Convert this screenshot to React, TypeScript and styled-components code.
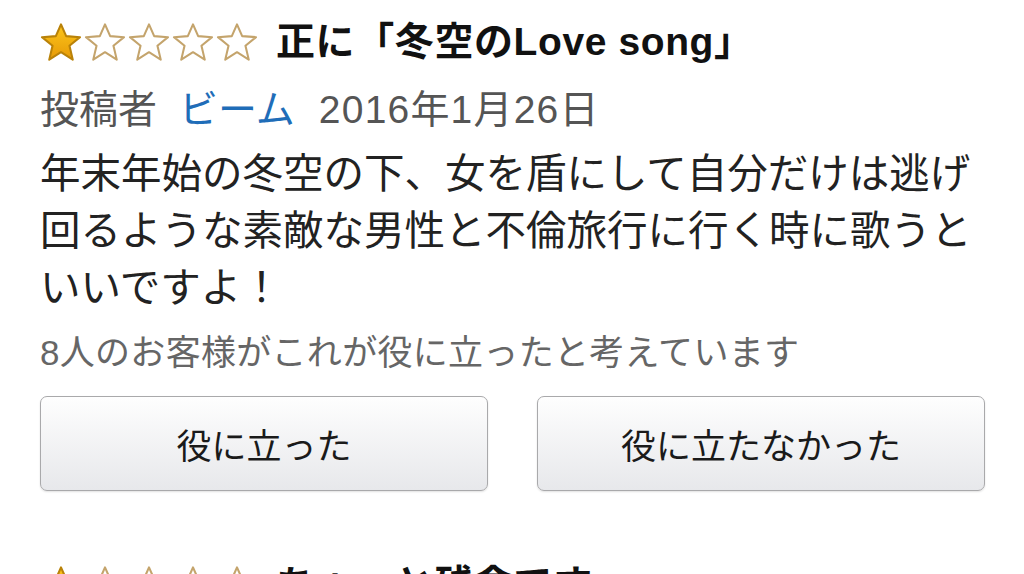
import styled, { createGlobalStyle } from 'styled-components';

const GlobalStyle = createGlobalStyle`
  html, body {
    margin: 0;
    padding: 0;
    height: 574px;
    overflow: hidden;
    background: #fff;
    font-family: 'Liberation Sans', 'Noto Sans CJK JP', sans-serif;
  }
`;

const Page = styled.main`
  padding: 22px 39px 0 40px;
`;

const Review = styled.article`
  display: flex;
  flex-direction: column;
  margin-bottom: 74px;
`;

const TitleRow = styled.div`
  display: flex;
  align-items: center;
  gap: 18px;
  height: 40px;
`;

const Stars = styled.div`
  display: flex;
  gap: 2px;
`;

const Title = styled.h3`
  margin: 0;
  font-size: 39px;
  line-height: 40px;
  font-weight: 700;
  letter-spacing: 0.6px;
  color: #111;
  white-space: nowrap;
`;

const Byline = styled.div`
  margin-top: 26px;
  display: flex;
  align-items: center;
  gap: 22px;
  font-size: 39px;
  line-height: 44px;
  color: #555;
`;

const Author = styled.a`
  color: #1f6db8;
  text-decoration: none;
  margin-right: 2px;
`;

const Date = styled.span`
  letter-spacing: 1.2px;
`;

const Body = styled.p`
  margin: 14px 0 0;
  width: 945px;
  font-size: 40.5px;
  line-height: 57px;
  color: #222;
`;

const Helpful = styled.p`
  margin: 16px 0 0;
  font-size: 35px;
  line-height: 40px;
  letter-spacing: 0.3px;
  color: #666;
`;

const Buttons = styled.div`
  margin-top: 23px;
  display: grid;
  grid-template-columns: 448px 448px;
  gap: 49px;
`;

const VoteButton = styled.button`
  height: 95px;
  border: 1.5px solid #a9a9ab;
  border-radius: 7px;
  background: linear-gradient(#fefefe, #e7e8eb);
  box-shadow: 0 1px 2px rgba(0, 0, 0, 0.12);
  font-family: inherit;
  font-size: 35px;
  color: #1a1a1a;
  cursor: pointer;
`;

function Star({ filled }: { filled: boolean }) {
  return (
    <svg width="42" height="38" viewBox="0 0 24 22">
      <defs>
        <linearGradient id="gold" x1="0" y1="0" x2="0" y2="1">
          <stop offset="0" stopColor="#fcc61c" />
          <stop offset="1" stopColor="#e79a06" />
        </linearGradient>
      </defs>
      <polygon
        points="12,0.8 15,7.6 23,8.2 16.9,13.2 18.8,21.2 12,16.9 5.2,21.2 7.1,13.2 1,8.2 9,7.6"
        fill={filled ? 'url(#gold)' : '#fff'}
        stroke={filled ? '#b98209' : '#c4a46c'}
        strokeWidth="1.2"
        strokeLinejoin="round"
      />
    </svg>
  );
}

function Rating({ value }: { value: number }) {
  return (
    <Stars>
      {[1, 2, 3, 4, 5].map(i => (
        <Star key={i} filled={i <= value} />
      ))}
    </Stars>
  );
}

export default function App() {
  return (
    <>
      <GlobalStyle />
      <Page>
        <Review>
          <TitleRow>
            <Rating value={1} />
            <Title>正に「冬空のLove song」</Title>
          </TitleRow>
          <Byline>
            <span>投稿者</span>
            <Author href="#">ビーム</Author>
            <Date>2016年1月26日</Date>
          </Byline>
          <Body>
            年末年始の冬空の下、女を盾にして自分だけは逃げ回るような素敵な男性と不倫旅行に行く時に歌うといいですよ！
          </Body>
          <Helpful>8人のお客様がこれが役に立ったと考えています</Helpful>
          <Buttons>
            <VoteButton>役に立った</VoteButton>
            <VoteButton>役に立たなかった</VoteButton>
          </Buttons>
        </Review>
        <Review>
          <TitleRow>
            <Rating value={1} />
            <Title>ちょっと残念です</Title>
          </TitleRow>
        </Review>
      </Page>
    </>
  );
}
